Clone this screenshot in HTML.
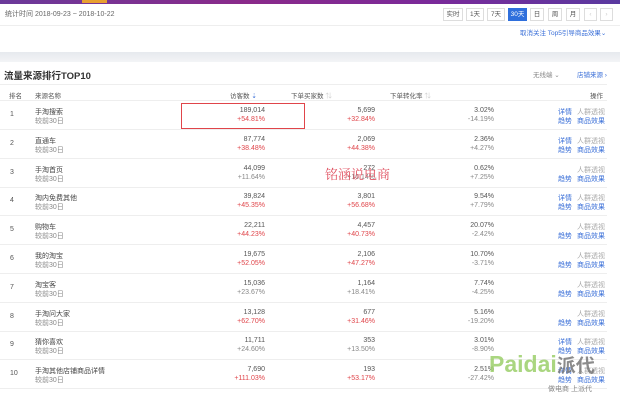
<!DOCTYPE html><html><head><meta charset="utf-8"><style>
*{margin:0;padding:0;box-sizing:border-box}
body{width:620px;height:401px;overflow:hidden;background:#fff;font-family:"Liberation Sans","Noto Sans CJK SC",sans-serif;font-size:7px;color:#555;position:relative}
.a{position:absolute;white-space:nowrap}
.r{text-align:right}
.red{color:#e0454a}
.g{color:#888}
.b{color:#3a6fd8}
.btn{position:absolute;top:8px;height:13px;border:1px solid #ddd;font-size:6.5px;line-height:11px;text-align:center;color:#555;background:#fff}
.row{position:absolute;left:0;width:607px;height:29px;border-bottom:1px solid #eee}
</style></head><body>
<div class="a" style="left:0;top:0;width:620px;height:4px;background:linear-gradient(90deg,#6b3a9a,#8a2a8a 40%,#7a2a9a 70%,#5a3aa0)"></div>
<div class="a" style="left:82px;top:0;width:25px;height:3px;background:#e8a030"></div>
<div class="a" style="left:5px;top:9px;font-size:7px;color:#666">统计时间 2018-09-23 ~ 2018-10-22</div>
<div class="btn" style="left:443px;width:20px">实时</div>
<div class="btn" style="left:466px;width:18px">1天</div>
<div class="btn" style="left:487px;width:18px">7天</div>
<div class="btn" style="left:508px;width:19px;background:#2f6fdc;color:#fff;border-color:#2f6fdc">30天</div>
<div class="btn" style="left:530px;width:14px">日</div>
<div class="btn" style="left:548px;width:14px">周</div>
<div class="btn" style="left:566px;width:14px">月</div>
<div class="btn" style="left:584px;width:13px;color:#ccc">‹</div>
<div class="btn" style="left:600px;width:13px;color:#ccc">›</div>
<div class="a" style="left:0;top:25px;width:620px;height:1px;background:#eee"></div>
<div class="a b" style="left:520px;top:27px;font-size:6.5px">取消关注 Top5引导商品效果⌄</div>
<div class="a" style="left:0;top:52px;width:620px;height:10px;background:linear-gradient(#e6e9ee,#f3f4f6)"></div>
<div class="a" style="left:4px;top:68px;font-size:9.5px;font-weight:bold;color:#333">流量来源排行TOP10</div>
<div class="a g" style="left:533px;top:69px;font-size:6.5px">无线端 ⌄</div>
<div class="a b" style="left:577px;top:69px;font-size:6.5px">店铺来源 ›</div>
<div class="a" style="left:0;top:84px;width:607px;height:1px;background:#eee"></div>
<div class="a" style="left:9px;top:90px;font-size:6.5px">排名</div>
<div class="a" style="left:35px;top:90px;font-size:6.5px">来源名称</div>
<div class="a" style="left:230px;top:90px;font-size:6.5px">访客数 <span class="b">⇣</span></div>
<div class="a" style="left:291px;top:90px;font-size:6.5px">下单买家数 <span style="color:#ccc">⇅</span></div>
<div class="a" style="left:390px;top:90px;font-size:6.5px">下单转化率 <span style="color:#ccc">⇅</span></div>
<div class="a" style="left:590px;top:90px;font-size:6.5px">操作</div>
<div class="a" style="left:0;top:100px;width:607px;height:1px;background:#eee"></div>
<div id="rows"></div>
<div class="a" style="left:181px;top:103px;width:124px;height:26px;border:1.5px solid #e0454a"></div>
<div class="a" style="left:325px;top:164px;font-size:13px;color:#e05060;font-family:'Noto Serif CJK SC',serif">铭涵说电商</div>
<div class="a" style="left:489px;top:351px;font-size:23px;font-weight:bold;color:#9ccf6a;opacity:.85">Paidai<span style="color:#777;font-size:19px">派代</span></div>
<div class="a" style="left:548px;top:384px;font-size:7px;color:#888">做电商 上派代</div>
<script>
var d=[["手淘搜索","189,014","+54.81%",1,"5,699","+32.84%",1,"3.02%","-14.19%",1],
["直通车","87,774","+38.48%",1,"2,069","+44.38%",1,"2.36%","+4.27%",1],
["手淘首页","44,099","+11.64%",0,"272","+16.14%",0,"0.62%","+7.25%",0],
["淘内免费其他","39,824","+45.35%",1,"3,801","+56.68%",1,"9.54%","+7.79%",1],
["购物车","22,211","+44.23%",1,"4,457","+40.73%",1,"20.07%","-2.42%",0],
["我的淘宝","19,675","+52.05%",1,"2,106","+47.27%",1,"10.70%","-3.71%",0],
["淘宝客","15,036","+23.67%",0,"1,164","+18.41%",0,"7.74%","-4.25%",0],
["手淘问大家","13,128","+62.70%",1,"677","+31.46%",1,"5.16%","-19.20%",0],
["猜你喜欢","11,711","+24.60%",0,"353","+13.50%",0,"3.01%","-8.90%",1],
["手淘其他店铺商品详情","7,690","+111.03%",1,"193","+53.17%",1,"2.51%","-27.42%",1]];
var h="";
d.forEach(function(r,i){var t=101+i*28.8;
h+='<div class="row" style="top:'+t+'px"></div>';
h+='<div class="a" style="left:10px;top:'+(t+10)+'px">'+(i+1)+'</div>';
h+='<div class="a" style="left:35px;top:'+(t+6)+'px;color:#444">'+r[0]+'</div>';
h+='<div class="a g" style="left:35px;top:'+(t+15)+'px">较前30日</div>';
function num(x,a,b,c){return '<div class="a r" style="right:'+x+'px;top:'+(t+6)+'px">'+a+'</div><div class="a r '+(c?'red':'g')+'" style="right:'+x+'px;top:'+(t+15)+'px">'+b+'</div>';}
h+=num(355,r[1],r[2],r[3]);h+=num(245,r[4],r[5],r[6]);h+=num(126,r[7],r[8],0);
if(r[9])h+='<div class="a b" style="left:558px;top:'+(t+6)+'px">详情</div>';
h+='<div class="a" style="left:577px;top:'+(t+6)+'px;color:#aaa">人群透视</div>';
h+='<div class="a b" style="left:558px;top:'+(t+15)+'px">趋势</div><div class="a b" style="left:577px;top:'+(t+15)+'px">商品效果</div>';
});
document.getElementById('rows').outerHTML=h;
</script>
</body></html>
